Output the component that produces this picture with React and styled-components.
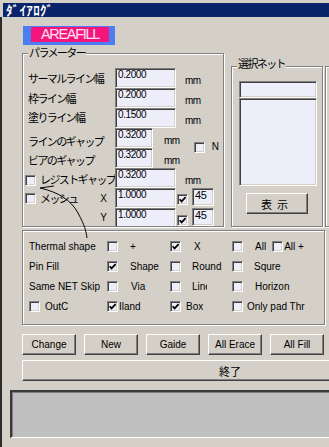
import React from "react";
import styled, { createGlobalStyle } from "styled-components";

const LATIN = `"Liberation Sans", Arial, sans-serif`;
const JP = `"Noto Sans CJK JP", "Noto Sans CJK SC", sans-serif`;

const Global = createGlobalStyle`
  html, body { margin: 0; padding: 0; background: #d4d0c8; }
  body { width: 329px; height: 447px; overflow: hidden; }
  #root { width: 329px; height: 447px; }
`;

const Screen = styled.div`
  position: relative;
  width: 329px;
  height: 447px;
  overflow: hidden;
  background: #d4d0c8;
  display: flex;
  flex-direction: column;
  font-family: ${LATIN};
  font-size: 10px;
  color: #000;
`;

const TitleBar = styled.div`
  flex-shrink: 0;
  margin: 3px 0 0 3px;
  height: 14px;
  background: #0a246a;
  color: #fff;
  font-family: ${JP};
  font-weight: bold;
  font-size: 13px;
  letter-spacing: 0.4px;
  line-height: 14px;
  padding-left: 3px;
  white-space: nowrap;
`;

const Body = styled.div`
  flex: 1;
  border-left: 2px solid #2c2c2c;
  display: flex;
  flex-direction: column;
  min-width: 0;
`;

const Content = styled.div`
  display: flex;
  flex-direction: column;
  padding-left: 20px;
`;

const Badge = styled.div`
  flex-shrink: 0;
  margin: 9px 0 0 1px;
  width: 92px;
  height: 19px;
  box-sizing: border-box;
  padding: 1px 0 0 8px;
  background: #4c7ef3;
`;

const BadgeInner = styled.div`
  width: 78px;
  height: 15px;
  background: #f4167c;
  color: #ffe2f0;
  font-family: ${LATIN};
  font-size: 14.5px;
  letter-spacing: -1.3px;
  line-height: 15px;
  display: flex;
  align-items: center;
  justify-content: center;
`;

const TopRow = styled.div`
  display: flex;
  align-items: flex-start;
  margin-top: 8px;
`;

const Group = styled.div`
  position: relative;
  flex-shrink: 0;
  width: ${(p) => p.$w}px;
  height: ${(p) => p.$h}px;
  margin-top: ${(p) => p.$mt || 0}px;
  margin-left: ${(p) => p.$ml || 0}px;
`;

const Frame = styled.div`
  width: 100%;
  height: 100%;
  box-sizing: border-box;
  border: 1px solid #808080;
  box-shadow: inset 1px 1px 0 #fff, 1px 1px 0 #fff;
  overflow: hidden;
  padding: ${(p) => p.$pad || "0"};
`;

const Legend = styled.span`
  position: absolute;
  left: ${(p) => p.$x}px;
  top: ${(p) => p.$top}px;
  z-index: 1;
  background: #d4d0c8;
  padding: 0 1px;
  font-family: ${JP};
  font-size: 11px;
  letter-spacing: -1.6px;
  line-height: 13px;
  white-space: nowrap;
`;

/* ---- parameter rows ---- */
const ParamRow = styled.div`
  display: flex;
  align-items: center;
  height: 20px;
`;

const LabelCell = styled.div`
  flex-shrink: 0;
  width: 92px;
  height: 100%;
  box-sizing: border-box;
  display: flex;
  align-items: center;
  padding-left: ${(p) => p.$pad}px;
  padding-right: 8px;
`;

const JLabel = styled.span`
  font-family: ${JP};
  font-size: 11px;
  letter-spacing: -1.6px;
  line-height: 13px;
  white-space: nowrap;
  margin-left: ${(p) => p.$ml || 0}px;
  margin-top: ${(p) => (p.$dy || 0) * 2}px;
`;

const AxisLabel = styled.span`
  margin-left: auto;
  font-size: 10px;
  margin-top: ${(p) => (p.$dy || 0) * 2}px;
`;

const sunken = `
  box-sizing: border-box;
  border: 1px solid;
  border-color: #808080 #fff #fff #808080;
  box-shadow: inset 1px 1px 0 #404040, inset -1px -1px 0 #d4d0c8;
  background: #eeeefb;
`;

const TextField = styled.div`
  ${sunken}
  flex-shrink: 0;
  width: ${(p) => p.$w}px;
  height: ${(p) => p.$h || 20}px;
  align-self: flex-start;
  margin-left: ${(p) => p.$ml || 0}px;
  font-size: ${(p) => p.$fs || 10}px;
  letter-spacing: -0.4px;
  line-height: 12px;
  padding: 0 0 0 2px;
  white-space: nowrap;
  overflow: hidden;
`;

const Unit = styled.span`
  flex-shrink: 0;
  margin-left: ${(p) => p.$ml}px;
  margin-top: 4px;
  font-size: 10px;
  letter-spacing: -0.5px;
`;

const SmallText = styled.span`
  flex-shrink: 0;
  font-size: 10px;
  margin-left: ${(p) => p.$ml || 0}px;
  margin-top: ${(p) => (p.$dy || 0) * 2}px;
`;

const BoxEl = styled.span`
  ${sunken}
  flex-shrink: 0;
  display: inline-flex;
  align-items: center;
  justify-content: center;
  width: 11px;
  height: 11px;
  margin-left: ${(p) => p.$ml || 0}px;
  margin-top: ${(p) => (p.$dy || 0) * 2}px;
`;

const Check = ({ checked, ml, dy }) => (
  <BoxEl $ml={ml} $dy={dy}>
    {checked && (
      <svg width="7" height="7" viewBox="0 0 7 7">
        <polyline
          points="0.6,3.2 2.6,5.4 6.6,1.2"
          fill="none"
          stroke="#000"
          strokeWidth="1.7"
        />
      </svg>
    )}
  </BoxEl>
);

/* ---- select net ---- */
const ListBox = styled.div`
  ${sunken}
  width: 78px;
  height: ${(p) => p.$h}px;
`;

const Button = styled.div`
  flex-shrink: 0;
  box-sizing: border-box;
  width: ${(p) => p.$w}px;
  height: 21px;
  border: 1px solid;
  border-color: #fff #404040 #404040 #fff;
  box-shadow: inset -1px -1px 0 #808080;
  background: #d4d0c8;
  display: flex;
  align-items: center;
  justify-content: center;
  font-family: ${(p) => (p.$jp ? JP : LATIN)};
  font-size: ${(p) => (p.$jp ? 11 : 10)}px;
  letter-spacing: ${(p) => p.$ls || 0}px;
  margin-top: ${(p) => p.$mt || 0}px;
  margin-left: ${(p) => p.$ml || 0}px;
  white-space: nowrap;
`;

/* ---- option grid ---- */
const OptRow = styled.div`
  display: grid;
  grid-template-columns: 84px 63px 62px 1fr;
  height: 20px;
  align-items: center;
`;

const OptCell = styled.div`
  display: flex;
  align-items: center;
  padding-left: ${(p) => p.$pad || 0}px;
  min-width: 0;
`;

const OptText = styled.span`
  flex-shrink: 0;
  font-size: 10px;
  white-space: nowrap;
  margin-left: ${(p) => p.$ml || 0}px;
  ${(p) => (p.$clip ? `width:${p.$clip}px; overflow:hidden;` : "")}
`;

const ButtonRow = styled.div`
  display: flex;
  gap: 8px;
  margin-top: 9px;
`;

const Panel = styled.div`
  flex-shrink: 0;
  margin: 9px 0 0 8px;
  width: 400px;
  height: 48px;
  box-sizing: border-box;
  border-top: 2px solid #3a3a3a;
  border-left: 2px solid #3a3a3a;
  border-bottom: 1px solid #fff;
  box-shadow: inset 1px 1px 0 #808080;
  background: #c0c0c0;
`;

const Annotation = styled.svg`
  position: absolute;
  left: 0;
  top: 0;
  pointer-events: none;
`;

const Opt = ({ checked, label, ml, clip, pad }) => (
  <OptCell $pad={pad}>
    <Check checked={checked} />
    {label && (
      <OptText $ml={ml} $clip={clip}>
        {label}
      </OptText>
    )}
  </OptCell>
);

export default function App() {
  return (
    <Screen>
      <Global />
      <TitleBar>ﾀﾞｲｱﾛｸﾞ</TitleBar>
      <Body>
        <Content>
          <Badge>
            <BadgeInner>AREAFILL</BadgeInner>
          </Badge>

          <TopRow>
            <Group $w={202} $h={174}>
              <Legend $x={6} $top={-7}>パラメーター</Legend>
              <Frame $pad="14px 0 0 0">
                <ParamRow>
                  <LabelCell $pad={5}><JLabel>サーマルライン幅</JLabel></LabelCell>
                  <TextField $w={61}>0.2000</TextField>
                  <Unit $ml={9}>mm</Unit>
                </ParamRow>
                <ParamRow>
                  <LabelCell $pad={5}><JLabel>枠ライン幅</JLabel></LabelCell>
                  <TextField $w={61}>0.2000</TextField>
                  <Unit $ml={9}>mm</Unit>
                </ParamRow>
                <ParamRow>
                  <LabelCell $pad={5}><JLabel $dy={-1}>塗りライン幅</JLabel></LabelCell>
                  <TextField $w={61}>0.1500</TextField>
                  <Unit $ml={9}>mm</Unit>
                </ParamRow>
                <ParamRow>
                  <LabelCell $pad={5}><JLabel $dy={3}>ラインのギャップ</JLabel></LabelCell>
                  <TextField $w={38}>0.3200</TextField>
                  <Unit $ml={11}>mm</Unit>
                  <Check ml={14} dy={9} />
                  <SmallText $ml={7} $dy={8}>N</SmallText>
                </ParamRow>
                <ParamRow>
                  <LabelCell $pad={5}><JLabel $dy={2}>ビアのギャップ</JLabel></LabelCell>
                  <TextField $w={38}>0.3200</TextField>
                  <Unit $ml={11}>mm</Unit>
                </ParamRow>
                <ParamRow>
                  <LabelCell $pad={2}>
                    <Check dy={2} />
                    <JLabel $ml={4} $dy={1}>レジストギャップ</JLabel>
                  </LabelCell>
                  <TextField $w={61}>0.3200</TextField>
                  <Unit $ml={9}>mm</Unit>
                </ParamRow>
                <ParamRow>
                  <LabelCell $pad={2}>
                    <Check />
                    <JLabel $ml={4}>メッシュ</JLabel>
                    <AxisLabel>X</AxisLabel>
                  </LabelCell>
                  <TextField $w={61}>1.0000</TextField>
                  <Check checked ml={1} dy={1} />
                  <TextField $w={22} $h={18} $ml={4} $fs={11}>45</TextField>
                </ParamRow>
                <ParamRow>
                  <LabelCell $pad={2}>
                    <AxisLabel $dy={-1}>Y</AxisLabel>
                  </LabelCell>
                  <TextField $w={61}>1.0000</TextField>
                  <Check checked ml={1} dy={2} />
                  <TextField $w={22} $h={18} $ml={4} $fs={11}>45</TextField>
                </ParamRow>
              </Frame>
            </Group>

            <Group $w={92} $h={161} $mt={13} $ml={7}>
              <Legend $x={6} $top={-9}>選択ネット</Legend>
              <Frame $pad="14px 0 0 7px">
                <ListBox $h={17} />
                <ListBox $h={88} />
                <Button $w={62} $mt={7} $ml={7} $jp $ls={5}>表示</Button>
              </Frame>
            </Group>

            <Group $w={40} $h={161} $mt={13} $ml={2}>
              <Frame />
            </Group>
          </TopRow>

          <Group $w={303} $h={95} $mt={3}>
            <Frame $pad="5px 0 0 0">
              <OptRow>
                <OptCell $pad={6}><OptText>Thermal shape</OptText></OptCell>
                <Opt label="+" ml={12} />
                <Opt checked label="X" ml={13} />
                <OptCell>
                  <Check />
                  <OptText $ml={12}>All</OptText>
                  <Check ml={6} />
                  <OptText $ml={1}>All +</OptText>
                </OptCell>
              </OptRow>
              <OptRow>
                <OptCell $pad={6}><OptText>Pin Fill</OptText></OptCell>
                <Opt checked label="Shape" ml={12} />
                <Opt label="Round" ml={11} />
                <Opt label="Squre" ml={11} />
              </OptRow>
              <OptRow>
                <OptCell $pad={6}><OptText>Same NET Skip</OptText></OptCell>
                <Opt label="Via" ml={13} />
                <Opt label="Line" ml={11} clip={15} />
                <Opt label="Horizon" ml={12} />
              </OptRow>
              <OptRow>
                <Opt pad={6} label="OutC" ml={5} />
                <Opt checked label="Iland" ml={1} />
                <Opt checked label="Box" ml={5} />
                <Opt label="Only pad Thr" ml={4} />
              </OptRow>
            </Frame>
          </Group>

          <ButtonRow>
            <Button $w={54}>Change</Button>
            <Button $w={54}>New</Button>
            <Button $w={54}>Gaide</Button>
            <Button $w={54}>All Erace</Button>
            <Button $w={54}>All Fill</Button>
            <Button $w={54} />
          </ButtonRow>

          <Button $w={416} $mt={5} $jp>終了</Button>
        </Content>

        <Panel />
      </Body>

      <Annotation width="329" height="447" viewBox="0 0 329 447">
        <path
          d="M40 188 C 58 192, 71 200, 78 213 S 86 231, 87 238"
          fill="none"
          stroke="#000"
          strokeWidth="1"
        />
        <path d="M40 188 L54 186" fill="none" stroke="#000" strokeWidth="1" />
      </Annotation>
    </Screen>
  );
}
